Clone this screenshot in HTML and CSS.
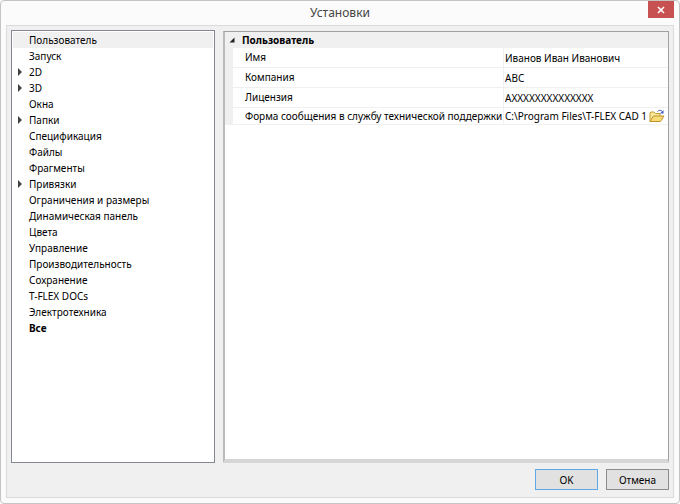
FILE: index.html
```html
<!DOCTYPE html>
<html lang="ru">
<head>
    <meta charset="UTF-8">
    <meta name="viewport" content="width=device-width, initial-scale=1.0">
    <title>Установки</title>
    <link rel="stylesheet" href="styles.css">
</head>
<body>
    <div class="window">
        <header class="titlebar">
            <h1>Установки</h1>
            <button type="button" class="close-btn" aria-label="Закрыть">
                <svg width="8" height="8" viewBox="0 0 8 8"><path d="M1 1L7 7M7 1L1 7" stroke="#fff" stroke-width="1.6"/></svg>
            </button>
        </header>

        <form class="content">
            <div class="panels">
                <ul class="tree">
                    <li class="selected">Пользователь</li>
                    <li>Запуск</li>
                    <li class="parent">2D</li>
                    <li class="parent">3D</li>
                    <li>Окна</li>
                    <li class="parent">Папки</li>
                    <li>Спецификация</li>
                    <li>Файлы</li>
                    <li>Фрагменты</li>
                    <li class="parent">Привязки</li>
                    <li>Ограничения и размеры</li>
                    <li>Динамическая панель</li>
                    <li>Цвета</li>
                    <li>Управление</li>
                    <li>Производительность</li>
                    <li>Сохранение</li>
                    <li>T-FLEX DOCs</li>
                    <li>Электротехника</li>
                    <li class="bold">Все</li>
                </ul>

                <section class="properties">
                    <h2>
                        <svg width="6" height="6" viewBox="0 0 6 6"><path d="M5.500 0.500V5.500H0.500Z" fill="#222"/></svg>
                        Пользователь
                    </h2>
                    <div class="rows">
                        <div class="row">
                            <label for="name">Имя</label>
                            <div class="value"><input type="text" id="name" value="Иванов Иван Иванович"></div>
                        </div>
                        <div class="row">
                            <label for="company">Компания</label>
                            <div class="value"><input type="text" id="company" value="ABC"></div>
                        </div>
                        <div class="row">
                            <label for="license">Лицензия</label>
                            <div class="value"><input type="text" id="license" value="AXXXXXXXXXXXXXX"></div>
                        </div>
                        <div class="row file-row">
                            <label for="report">Форма сообщения в службу технической поддержки</label>
                            <div class="value">
                                <input type="text" id="report" value="C:\Program Files\T-FLEX CAD 16">
                                <button type="button" class="browse-btn" aria-label="Обзор">
                                    <svg width="16" height="14" viewBox="0 0 16 14">
                                        <path d="M1 12.500V4L2 3H5L6.500 4.500H11V7" fill="#fbe9a0" stroke="#c79a2e"/>
                                        <path d="M1 12.500L4.500 7H15L11.500 12.500Z" fill="#f8dc78" stroke="#c0922a"/>
                                        <path d="M8.500 2.500C10 0.800 12 0.800 13.500 2.800" fill="none" stroke="#5566c8"/>
                                        <path d="M14.500 1V4.500H11Z" fill="#4656c0"/>
                                    </svg>
                                </button>
                            </div>
                        </div>
                    </div>
                </section>
            </div>

            <div class="buttons">
                <button type="submit" class="btn default">OK</button>
                <button type="button" class="btn">Отмена</button>
            </div>
        </form>
    </div>
</body>
</html>
```
FILE: styles.css
```css
* {
    box-sizing: border-box;
}
body {
    margin: 0;
    font-family: "Noto Sans", "Open Sans", sans-serif;
    font-size: 10px;
    line-height: 16px;
    color: #000;
}
.window {
    display: flex;
    flex-direction: column;
    height: 100vh;
    padding: 0 5px 5px;
    background-color: #fbfbfb;
    border: 1px solid #c4c4c4;
    border-radius: 4px;
}
.titlebar {
    display: grid;
    grid-template-columns: 1fr auto 1fr;
    height: 24px;
}
.titlebar h1 {
    grid-column: 2;
    margin: 0;
    font-size: 12px;
    font-weight: normal;
    line-height: 24px;
    color: #444;
}
.close-btn {
    display: flex;
    align-items: center;
    justify-content: center;
    justify-self: end;
    width: 26px;
    height: 17px;
    padding: 0;
    border: none;
    background-color: #c75050;
}
.content {
    flex: 1;
    display: flex;
    flex-direction: column;
    min-height: 0;
    padding: 4px;
    background-color: #f0f0f0;
    border: 1px solid #dadada;
}
.panels {
    flex: 1;
    display: grid;
    grid-template-columns: 204px 1fr;
    gap: 8px;
    min-height: 0;
}
.tree {
    margin: 0;
    padding: 1px;
    list-style: none;
    background-color: #fff;
    border: 1px solid #828790;
}
.tree li {
    position: relative;
    padding-left: 16px;
}
.tree .selected {
    background-color: #f0f0f0;
}
.tree .bold {
    font-weight: bold;
}
.parent::before {
    content: "";
    position: absolute;
    left: 5px;
    top: 4px;
    border: 4px solid transparent;
    border-left-color: #444;
    border-right: none;
}
.properties {
    margin-top: 1px;
    background-color: #fff;
    border: 1px solid #a0a0a0;
    border-left: 2px solid #bbb;
    border-bottom: 4px solid #d6d6d6;
}
.properties h2 {
    display: flex;
    align-items: center;
    gap: 7px;
    margin: 0;
    padding-left: 4px;
    font-size: 10px;
    line-height: 16px;
    background-color: #f0f0f0;
}
.rows {
    border-left: 8px solid #f0f0f0;
}
.row {
    display: grid;
    grid-template-columns: 270px 1fr;
    height: 20px;
    line-height: 19px;
    border-bottom: 1px solid #f0f0f0;
}
.row label {
    padding-left: 12px;
    white-space: nowrap;
}
.value {
    display: flex;
    align-items: center;
    min-width: 0;
    padding: 0 3px 0 1px;
    border-left: 1px solid #f0f0f0;
}
.value input {
    flex: 1;
    min-width: 0;
    height: 16px;
    padding: 0;
    border: none;
    background: none;
    font: inherit;
    line-height: 16px;
    color: inherit;
}
.file-row {
    height: 17px;
    line-height: 16px;
}
.browse-btn {
    display: flex;
    padding: 0;
    margin-left: 2px;
    border: none;
    background: none;
}
.buttons {
    display: flex;
    justify-content: flex-end;
    gap: 8px;
    padding: 6px 0 3px;
}
.btn {
    width: 63px;
    height: 21px;
    padding: 0;
    border: 1px solid #8c8c8c;
    background-color: #e1e1e1;
    font: inherit;
    color: #000;
}
.btn.default {
    border-color: #5ea7e8;
}
```
